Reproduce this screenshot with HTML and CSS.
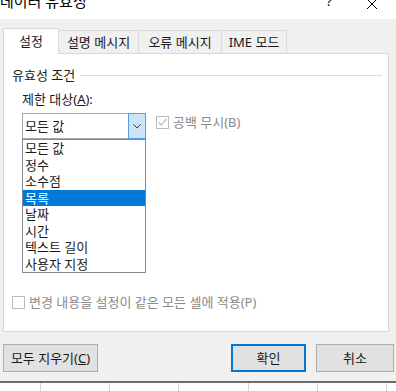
FILE: index.html
```
<!DOCTYPE html>
<html lang="ko">
<head>
<meta charset="utf-8">
<link rel="stylesheet" href="styles.css">
</head>
<body>
<div class="titlebar">
  <span class="title">데이터 유효성</span>
  <span class="help">?</span>
  <svg class="close" width="12" height="12" viewBox="0 0 12 12"><path d="M1 1 L11 11 M11 1 L1 11" stroke="#000" stroke-width="1" fill="none"/></svg>
</div>
<div class="tabs">
  <div class="tab active">설정</div>
  <div class="tab t2">설명 메시지</div>
  <div class="tab t3">오류 메시지</div>
  <div class="tab t4">IME 모드</div>
</div>
<div class="panel">
  <div class="group-head"><span>유효성 조건</span></div>
  <div class="field-label">제한 대상(<u>A</u>):</div>
  <div class="combo-row">
    <div class="combo">
      <span class="combo-text">모든 값</span>
      <span class="combo-btn"><svg width="8" height="5" viewBox="0 0 8 5"><path d="M0.5 0.5 L4 4 L7.5 0.5" stroke="#333" stroke-width="1" fill="none"/></svg></span>
      <ul class="list">
        <li>모든 값</li>
        <li>정수</li>
        <li>소수점</li>
        <li class="sel">목록</li>
        <li>날짜</li>
        <li>시간</li>
        <li>텍스트 길이</li>
        <li>사용자 지정</li>
      </ul>
    </div>
    <span class="check checked"><svg width="11" height="11" viewBox="0 0 11 11"><path d="M1.5 5.5 L4.2 8.2 L9.5 2" stroke="#bcbcbc" stroke-width="1.2" fill="none"/></svg></span>
    <span class="disabled-text">공백 무시(B)</span>
  </div>
  <div class="spacer"></div>
  <div class="apply-row">
    <span class="check"></span>
    <span class="disabled-text">변경 내용을 설정이 같은 모든 셀에 적용(P)</span>
  </div>
</div>
<div class="buttons">
  <button class="btn clear">모두 지우기(<u>C</u>)</button>
  <button class="btn ok">확인</button>
  <button class="btn cancel">취소</button>
</div>
<div class="sheet-edge"></div>
<div class="sheet">
  <span class="col c1"></span>
  <span class="col c2"></span>
  <span class="col c3"></span>
  <span class="col c4"></span>
  <span class="col c5"></span>
  <span class="col c6"></span>
</div>
</body>
</html>
```
FILE: styles.css
```
* { box-sizing: border-box; }
html, body { margin: 0; padding: 0; }
body {
  width: 396px;
  height: 391px;
  overflow: hidden;
  background: #f0f0f0;
  font-family: "Noto Sans", "Noto Sans CJK KR", sans-serif;
  font-size: 13px;
  color: #1a1a1a;
}
u { text-decoration: underline; text-underline-offset: 1px; }

.titlebar {
  height: 19px;
  background: #fff;
  display: flex;
  align-items: flex-start;
  overflow: hidden;
}
.title {
  font-size: 15px;
  line-height: 20px;
  margin-top: -9px;
  margin-left: 0;
  color: #000;
}
.help {
  margin-left: auto;
  font-size: 13px;
  line-height: 18px;
  margin-top: -8px;
  color: #000;
}
.close {
  margin: -2px 18px 0 34px;
}

.tabs {
  display: flex;
  align-items: flex-end;
  height: 25px;
  margin: 9px 0 0 3px;
}
.tab {
  height: 23px;
  border: 1px solid #d9d9d9;
  border-bottom: none;
  border-left: none;
  background: #f0f0f0;
  display: flex;
  align-items: center;
  justify-content: center;
  line-height: 16px;
  padding-bottom: 1px;
}
.tab.active {
  height: 26px;
  width: 56px;
  border-left: 1px solid #d9d9d9;
  background: #fff;
  margin-bottom: -1px;
  position: relative;
  z-index: 1;
  padding-bottom: 2px;
}
.t2 { width: 80px; }
.t3 { width: 83px; }
.t4 { width: 65px; }

.panel {
  margin-left: 3px;
  width: 386px;
  height: 279px;
  background: #fff;
  border: 1px solid #d9d9d9;
  display: flex;
  flex-direction: column;
  padding: 13px 6px 0 8px;
}
.group-head {
  display: flex;
  align-items: center;
  gap: 5px;
  line-height: 16px;
}
.group-head::after {
  content: "";
  flex: 1;
  height: 1px;
  background: #dcdcdc;
}
.field-label {
  margin: 8px 0 0 10px;
  line-height: 16px;
}
.combo-row {
  margin: 6px 0 0 10px;
  display: flex;
  align-items: flex-start;
}
.combo {
  position: relative;
  width: 124px;
  height: 26px;
  border: 1px solid #a8a8a8;
  display: flex;
  align-items: center;
}
.combo-text {
  flex: 1;
  padding-left: 2px;
  line-height: 16px;
}
.combo-btn {
  width: 18px;
  height: 26px;
  margin: -1px -1px -1px 0;
  border: 1px solid #569de5;
  background: #cce4f7;
  display: flex;
  align-items: center;
  justify-content: center;
}
.list {
  position: absolute;
  left: -1px;
  top: 25px;
  width: 124px;
  margin: 0;
  padding: 0;
  list-style: none;
  border: 1px solid #828790;
  background: #fff;
  z-index: 2;
}
.list li {
  height: 16.5px;
  line-height: 16.5px;
  padding-left: 2px;
}
.list li.sel {
  background: #0078d7;
  color: #fff;
}
.check {
  width: 13px;
  height: 13px;
  border: 1px solid #bcbcbc;
  background: #fff;
  display: flex;
  align-items: center;
  justify-content: center;
  flex: none;
}
.combo-row .check {
  margin: 3px 0 0 10px;
}
.disabled-text {
  color: #8a8a8a;
  line-height: 16px;
  margin-left: 4px;
}
.combo-row .disabled-text { margin-top: 1px; }
.spacer { flex: 1; }
.apply-row {
  display: flex;
  align-items: center;
  margin-bottom: 21px;
}

.buttons {
  display: flex;
  margin: 12px 0 0 3px;
  height: 28px;
}
.btn {
  font: inherit;
  color: #1a1a1a;
  background: #e1e1e1;
  border: 1px solid #adadad;
  height: 28px;
  padding: 0;
  line-height: 16px;
}
.clear { width: 95px; }
.ok {
  width: 75px;
  margin-left: auto;
  border: 2px solid #0078d7;
}
.cancel { width: 78px; margin: 0 2px 0 10px; }

.sheet-edge {
  margin-top: 9px;
  height: 2px;
  background: #6b6b6b;
}
.sheet {
  height: 8px;
  background: #fff;
  position: relative;
}
.col {
  position: absolute;
  top: 0;
  bottom: 0;
  width: 1px;
  background: #d4d4d4;
}
.c1 { left: 40px; }
.c2 { left: 109px; }
.c3 { left: 178px; }
.c4 { left: 248px; }
.c5 { left: 317px; }
.c6 { left: 386px; }
```
